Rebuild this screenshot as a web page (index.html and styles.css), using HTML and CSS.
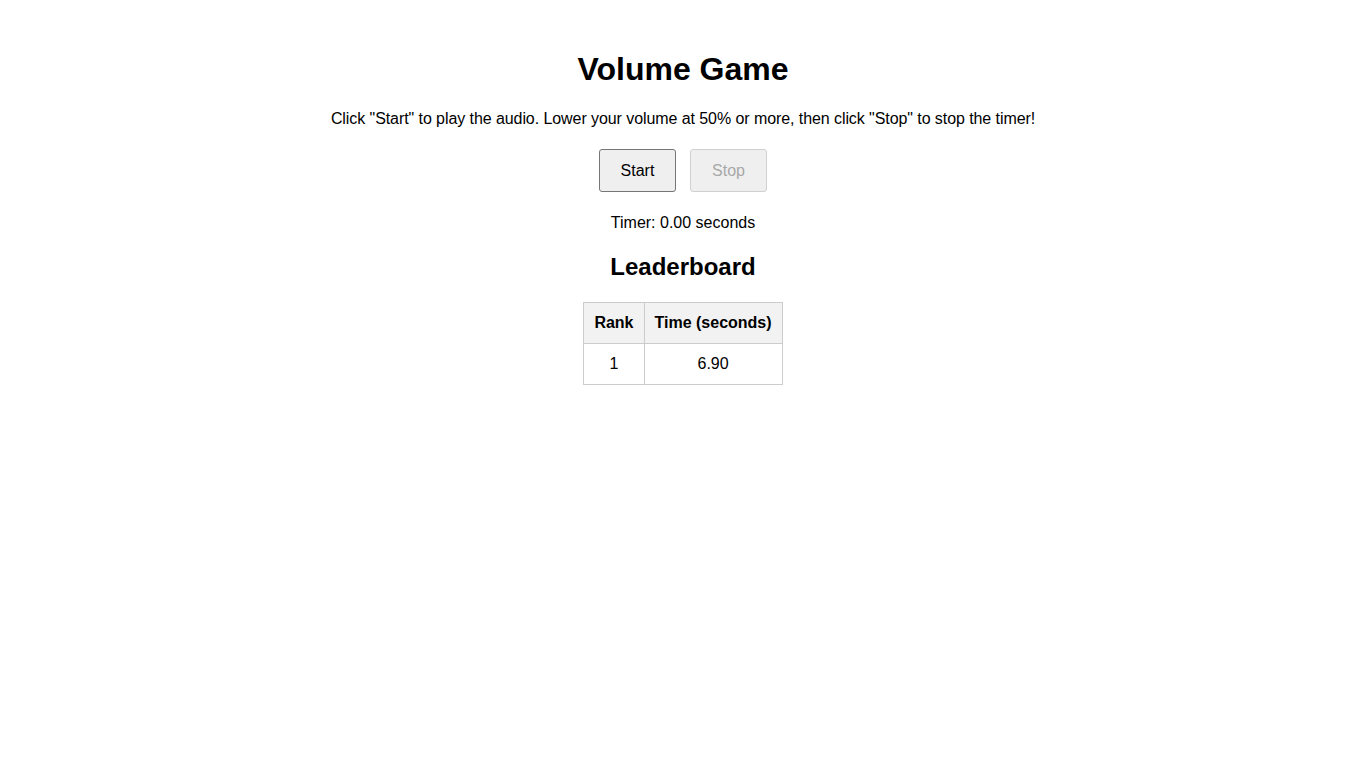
FILE: index.html
```html
<!DOCTYPE html>
<html>
<head>
<meta charset="utf-8">
<title>Volume Game</title>
<link rel="stylesheet" href="styles.css">
</head>
<body>
<main class="game">
  <h1 class="title">Volume Game</h1>
  <p class="intro">Click "Start" to play the audio. Lower your volume at 50% or more, then click "Stop" to stop the timer!</p>
  <div class="controls">
    <button class="btn">Start</button>
    <button class="btn" disabled>Stop</button>
  </div>
  <p class="timer">Timer: 0.00 seconds</p>
  <h2 class="subtitle">Leaderboard</h2>
  <table class="board">
    <thead>
      <tr><th>Rank</th><th>Time (seconds)</th></tr>
    </thead>
    <tbody>
      <tr><td>1</td><td>6.90</td></tr>
    </tbody>
  </table>
</main>
</body>
</html>
```

FILE: styles.css
```css
html, body {
  margin: 0;
  padding: 0;
  background: #fff;
}
body {
  font-family: "Liberation Sans", Arial, sans-serif;
  color: #000;
}
.game {
  display: flex;
  flex-direction: column;
  align-items: center;
  padding-top: 51px;
  text-align: center;
}
.title {
  margin: 0;
  font-size: 32px;
  line-height: 37px;
  font-weight: bold;
}
.intro {
  margin: 22px 0 0;
  font-size: 16px;
  line-height: 18px;
  letter-spacing: -0.075px;
}
.controls {
  margin-top: 21px;
  display: flex;
  gap: 14px;
}
.btn {
  font-family: "Liberation Sans", Arial, sans-serif;
  font-size: 16px;
  line-height: 18px;
  width: 77px;
  height: 43px;
  padding: 0;
  background: #efefef;
  border: 1px solid #767676;
  border-radius: 3px;
  color: #000;
}
.btn:disabled {
  background: #efefef;
  border-color: #d0d0d0;
  color: #a8a8a8;
}
.timer {
  margin: 22px 0 0;
  font-size: 16px;
  line-height: 18px;
}
.subtitle {
  margin: 21px 0 0;
  font-size: 24px;
  line-height: 28px;
  font-weight: bold;
}
.board {
  margin-top: 21px;
  border-collapse: collapse;
  font-size: 16px;
}
.board th, .board td {
  border: 1px solid #ccc;
  padding: 10px;
  line-height: 20px;
}
.board th {
  background: #f2f2f2;
  font-weight: bold;
}
```
